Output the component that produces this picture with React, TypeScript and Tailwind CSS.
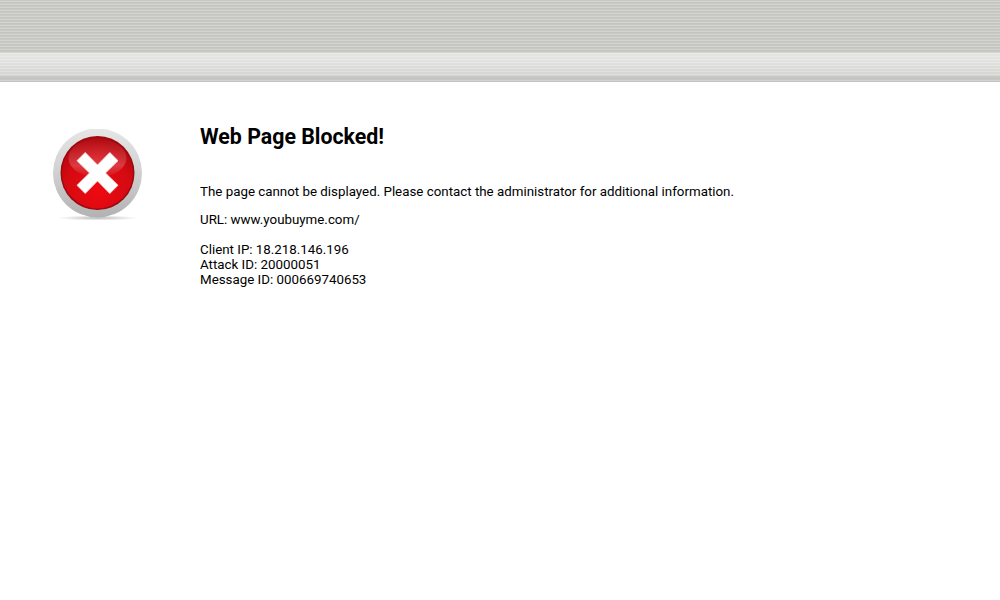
// Blocked page notice: striped header band, error badge, request details.

function ErrorBadge() {
  return (
    <svg width="96" height="96" viewBox="0 0 96 96" className="block">
      <defs>
        <linearGradient id="ring" x1="0" y1="0" x2="0" y2="1">
          <stop offset="0" stopColor="#e6e6e6" />
          <stop offset="0.5" stopColor="#d0d0d0" />
          <stop offset="1" stopColor="#b2b2b2" />
        </linearGradient>
        <radialGradient id="disc" cx="0.5" cy="0.75" r="0.78">
          <stop offset="0" stopColor="#ee0a10" />
          <stop offset="0.6" stopColor="#d40a12" />
          <stop offset="1" stopColor="#a8060c" />
        </radialGradient>
        <linearGradient id="gloss" x1="0" y1="0" x2="0" y2="1">
          <stop offset="0" stopColor="#ffffff" stopOpacity="0.02" />
          <stop offset="0.7" stopColor="#ffffff" stopOpacity="0.2" />
          <stop offset="1" stopColor="#ffffff" stopOpacity="0.02" />
        </linearGradient>
        <radialGradient id="shadow" cx="0.5" cy="0.5" r="0.5">
          <stop offset="0" stopColor="#777" stopOpacity="0.5" />
          <stop offset="1" stopColor="#777" stopOpacity="0" />
        </radialGradient>
      </defs>
      <ellipse cx="48.5" cy="89" rx="40" ry="2.5" fill="url(#shadow)" />
      <circle cx="48.5" cy="44" r="44.5" fill="url(#ring)" />
      <circle cx="48.5" cy="44" r="37" fill="#9a0a0e" />
      <circle cx="48.5" cy="44" r="35.5" fill="url(#disc)" />
      <ellipse cx="48.5" cy="29" rx="29" ry="19" fill="url(#gloss)" />
      <path
        d="M36.2 23.5 L48.5 36 L60.8 23.5 L69 31.7 L56.5 44 L69 56.3 L60.8 64.5 L48.5 52 L36.2 64.5 L28 56.3 L40.5 44 L28 31.7 Z"
        fill="#ffffff"
        stroke="#f3e6e6"
        strokeWidth="0.8"
        strokeLinejoin="round"
      />
    </svg>
  );
}

export default function App() {
  return (
    <div className="min-h-[600px] w-full bg-white font-['Roboto',sans-serif] text-black">
      <div className="h-[53px] bg-[repeating-linear-gradient(180deg,#c8c9c4_0px,#c8c9c4_1px,#d4d5d0_1px,#d4d5d0_2px,#c4c5c0_2px,#c4c5c0_3px)]" />
      <div className="h-[29px] bg-[repeating-linear-gradient(180deg,rgba(255,255,255,0.14)_0px,rgba(255,255,255,0.14)_1px,rgba(0,0,0,0.02)_1px,rgba(0,0,0,0.02)_3px),linear-gradient(180deg,#e9eae7_0px,#e6e7e4_8px,#dcddd9_18px,#dadbd7_23px,#b9bab6_24px,#c6c7c3_25px,#cfd0cc_28px,#bcbdb9_29px)]" />
      <div className="flex pt-[47px]">
        <div className="w-[200px] shrink-0 pl-[49px]">
          <ErrorBadge />
        </div>
        <div className="flex flex-col">
          <h1 className="mt-[-5px] text-[21.33px] font-bold leading-[25px]">Web Page Blocked!</h1>
          <p className="mt-[35px] text-[13.33px] leading-[15px]">
            The page cannot be displayed. Please contact the administrator for additional information.
          </p>
          <p className="mt-[13px] text-[13.33px] leading-[15px]">URL: www.youbuyme.com/</p>
          <p className="mt-[15px] text-[13.33px] leading-[15px]">
            Client IP: 18.218.146.196
            <br />
            Attack ID: 20000051
            <br />
            Message ID: 000669740653
          </p>
        </div>
      </div>
    </div>
  );
}
